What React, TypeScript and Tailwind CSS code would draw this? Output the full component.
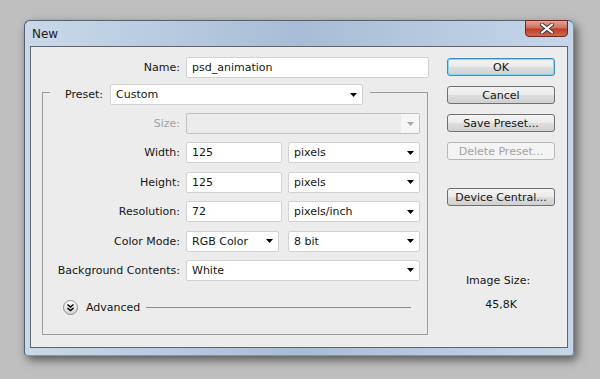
import { clsx } from 'clsx';

const Arrow = ({ muted }: { muted?: boolean }) => (
  <svg width="7" height="4" viewBox="0 0 7 4" className="shrink-0">
    <path d="M0 0h7L3.5 4z" fill={muted ? '#a8a8a8' : '#000'} />
  </svg>
);

interface DropProps {
  value?: string;
  className?: string;
  disabled?: boolean;
}

const Drop = ({ value, className, disabled }: DropProps) =>
  disabled ? (
    <div className={clsx('flex h-[21px] shrink-0 rounded-[2px] border border-[#c2c2c2] bg-[#ececec]', className)}>
      <div className="flex-1" />
      <div className="flex w-[18px] items-center justify-center bg-[#f6f6f6]">
        <Arrow muted />
      </div>
    </div>
  ) : (
    <div
      className={clsx(
        'flex h-[21px] shrink-0 items-center justify-between rounded-[2px] border border-[#d2d2d2] bg-white pr-[5px] pl-[5px]',
        className,
      )}
    >
      <span>{value}</span>
      <Arrow />
    </div>
  );

const Input = ({ value, className }: { value: string; className?: string }) => (
  <div className={clsx('flex h-[21px] shrink-0 items-center rounded-[2px] border border-[#d2d2d2] bg-white pl-[5px]', className)}>
    {value}
  </div>
);

const Row = ({ label, muted, children }: { label: string; muted?: boolean; children: React.ReactNode }) => (
  <div className="flex h-[21px] items-center gap-[6px]">
    <span className={clsx('w-[137px] shrink-0 text-right', muted && 'text-[#a3a3a3]')}>{label}</span>
    {children}
  </div>
);

const Button = ({ label, def, disabled, className }: { label: string; def?: boolean; disabled?: boolean; className?: string }) => (
  <div
    className={clsx(
      'flex h-[18px] w-[108px] items-center justify-center rounded-[3px] border',
      disabled
        ? 'border-[#b5b9bc] bg-[#f4f4f4] text-[#a3a3a3]'
        : 'bg-[linear-gradient(#f3f3f3_0%,#ebebeb_50%,#dedede_50%,#d0d0d0_100%)]',
      def ? 'border-[#3c8cc4] shadow-[inset_0_0_0_1px_#8ad6f5]' : !disabled && 'border-[#707070]',
      className,
    )}
  >
    {label}
  </div>
);

export default function App() {
  return (
    <div className="h-[379px] w-[600px] bg-[#bfbfbf] pt-[20px] pl-[24px] font-['DejaVu_Sans',sans-serif] text-[11px] leading-[13px] text-[#161616]">
      <div className="flex h-[336px] w-[550px] flex-col rounded-t-[6px] rounded-b-[4px] border border-[#55606d] border-r-[#3aa6d6] border-b-[#2fb2e4] bg-linear-to-r from-[#c9d9ea] via-[#a7bcd6] to-[#c5d6e8] px-[5px] pb-[7px] shadow-[3px_4px_10px_rgba(0,0,0,0.55)]">
        {/* title bar */}
        <div className="flex h-[25px] shrink-0 items-start justify-between">
          <span className="pt-[6px] pl-[2px] text-[12px] leading-[14px] text-[#1b1b1b]">New</span>
          <div className="-mt-px flex h-[17px] w-[43px] items-center justify-center rounded-b-[4px] border border-[#6e2a22] bg-[linear-gradient(#e7a394_0%,#d26f5e_45%,#bf3d2a_55%,#cf6a4c_100%)]">
            <svg width="14" height="11" viewBox="0 0 14 11">
              <path d="M2 1.5l10 8M12 1.5l-10 8" stroke="#3a3a3a" strokeWidth="4" strokeLinecap="round" />
              <path d="M2 1.5l10 8M12 1.5l-10 8" stroke="#fff" strokeWidth="2.2" strokeLinecap="round" />
            </svg>
          </div>
        </div>

        {/* client area */}
        <div className="flex flex-1 border border-[#5f656d] bg-[#ececec] pt-[10px] pl-[11px]">
          <div className="w-[386px] shrink-0">
            <div className="flex h-[21px] items-center gap-[6px]">
              <span className="w-[138px] shrink-0 text-right">Name:</span>
              <Input value="psd_animation" className="w-[243px]" />
            </div>

            <fieldset className="mt-[6px] min-w-0 border border-[#9c9c9c] pb-[19px]">
              <legend className="ml-[7px] pr-[7px] pl-[15px]">
                <div className="-mb-[5px] flex items-center gap-[7px]">
                  <span>Preset:</span>
                  <Drop value="Custom" className="w-[253px]" />
                </div>
              </legend>
              <div className="mt-[13px] flex flex-col gap-[8.4px]">
                <Row label="Size:" muted>
                  <Drop disabled className="w-[234px]" />
                </Row>
                <Row label="Width:">
                  <Input value="125" className="w-[96px]" />
                  <Drop value="pixels" className="w-[132px]" />
                </Row>
                <Row label="Height:">
                  <Input value="125" className="w-[96px]" />
                  <Drop value="pixels" className="w-[132px]" />
                </Row>
                <Row label="Resolution:">
                  <Input value="72" className="w-[96px]" />
                  <Drop value="pixels/inch" className="w-[132px]" />
                </Row>
                <Row label="Color Mode:">
                  <Drop value="RGB Color" className="w-[93px]" />
                  <Drop value="8 bit" className="ml-[3px] w-[132px]" />
                </Row>
                <Row label="Background Contents:">
                  <Drop value="White" className="w-[234px]" />
                </Row>
              </div>
              <div className="mt-[19px] mr-[16px] ml-[20px] flex items-center">
                <svg width="15" height="15" viewBox="0 0 15 15" className="shrink-0">
                  <defs>
                    <linearGradient id="adv" x1="0" y1="0" x2="0" y2="1">
                      <stop offset="0" stopColor="#ffffff" />
                      <stop offset="1" stopColor="#d2d2d2" />
                    </linearGradient>
                  </defs>
                  <circle cx="7.5" cy="7.5" r="7" fill="url(#adv)" stroke="#8e8e8e" />
                  <path d="M4.5 4.5l3 2.5 3-2.5M4.5 8l3 2.5 3-2.5" fill="none" stroke="#000" strokeWidth="1.6" />
                </svg>
                <span className="ml-[8px]">Advanced</span>
                <div className="ml-[6px] h-px flex-1 bg-[#8c8c8c]" />
              </div>
            </fieldset>
          </div>

          <div className="mt-[1px] ml-[19px] flex w-[108px] flex-col">
            <Button label="OK" def />
            <Button label="Cancel" className="mt-[10px]" />
            <Button label="Save Preset..." className="mt-[10px]" />
            <Button label="Delete Preset..." disabled className="mt-[10px]" />
            <Button label="Device Central..." className="mt-[28px]" />
            <div className="mt-[68px] pr-[6px] text-center">Image Size:</div>
            <div className="mt-[11px] text-center">45,8K</div>
          </div>
        </div>
      </div>
    </div>
  );
}
